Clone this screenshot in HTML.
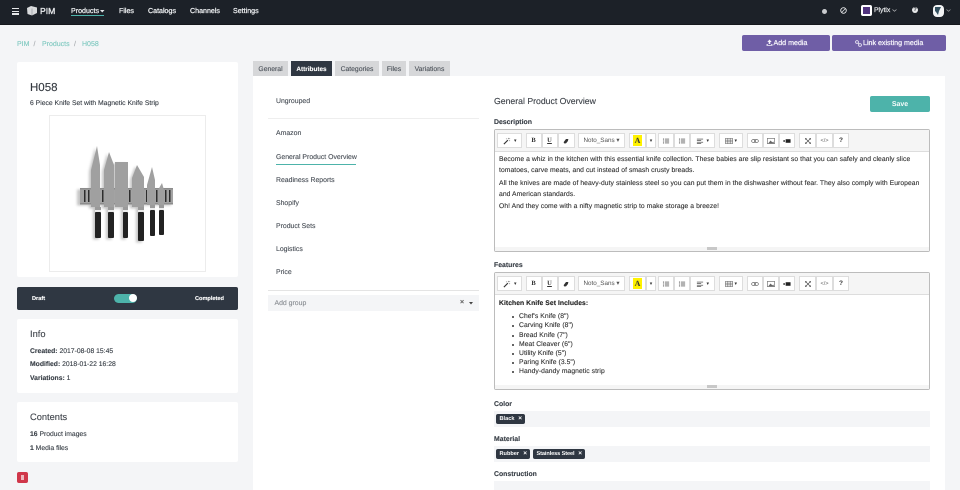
<!DOCTYPE html>
<html><head><meta charset="utf-8"><title>PIM</title>
<style>
html,body{margin:0;padding:0;width:960px;height:490px;overflow:hidden;background:#f4f5f7}
#w{position:absolute;left:0;top:0;width:960px;height:490px;overflow:hidden;filter:blur(.3px);font-family:"Liberation Sans",sans-serif;color:#3a4048;text-rendering:geometricPrecision}
.t{position:absolute;white-space:nowrap;line-height:0;font-size:6.8px;margin-top:1.3px;-webkit-text-stroke:.12px currentColor}
.b{position:absolute;box-sizing:border-box}
.card{position:absolute;background:#fff;left:17px;width:221px;border-radius:2px}
.n{color:#eef0f2;font-size:7.1px;top:9.500px;-webkit-text-stroke:.25px currentColor}
.g{font-size:6.900px;left:276px;color:#4a5058}
.l{font-size:6.900px;font-weight:bold;left:494px;color:#3a4048}
.t.p{font-size:6.750px;left:499px;color:#333;letter-spacing:.066px;margin-top:1.800px}
.ed{position:absolute;left:494px;width:436px;box-sizing:border-box;background:#fff;border:1px solid #bcbcbc;border-radius:2px}
.tb{position:absolute;left:0;top:0;right:0;height:21px;background:#f5f5f5;border-bottom:1px solid #ddd}
.h{position:absolute;height:15px;top:3px;box-sizing:border-box;background:#fff;border:1px solid #ddd;font-size:6.500px;color:#333;text-align:center;line-height:14px;white-space:nowrap}
.h svg{position:absolute;left:50%;top:50%;transform:translate(-50%,-50%)}
.st{position:absolute;left:0;right:0;bottom:0;height:4px;background:#f5f5f5}
.st i{position:absolute;left:212px;width:10px;top:0;height:3px;background:#c8c8c8}
.tag{position:absolute;height:10px;background:#2f3742;border-radius:2px;color:#fff;font-size:5.600px;font-weight:bold;line-height:10.500px;padding-left:3.500px;box-sizing:border-box;white-space:nowrap}
.tag span{position:absolute;right:3px;top:0;font-size:6.500px}
.f{position:absolute;left:494px;width:436px;background:#f4f5f7}
.tab{position:absolute;top:61px;height:15px;background:#d6d7d9;color:#4a5058;font-size:6.800px;text-align:center;line-height:17.500px;-webkit-text-stroke:.1px currentColor}
.btn{position:absolute;top:35px;height:16px;background:#6f5ea6;border-radius:2px;color:#f4f2fa;font-size:7.100px;line-height:17.500px;white-space:nowrap;-webkit-text-stroke:.25px currentColor}
</style></head><body><div id="w">

<svg width="0" height="0" style="position:absolute">
<symbol id="wand" viewBox="0 0 9 9"><path d="M1 8 5.500 3.500" stroke="#333" stroke-width="1.300"/><path d="M6.500 1v1.500M5.500 1.500 8 2M8 4.500 6.800 4M3.500 1.500 4 2.500" stroke="#777" stroke-width=".7"/></symbol>
<symbol id="eras" viewBox="0 0 9 9"><path d="M1.500 6 4.500 2h3L7 4.500 4.500 7.500H2z" fill="#333"/></symbol>
<symbol id="ul" viewBox="0 0 9 9"><path d="M3 2h5.500M3 4.500h5.500M3 7h5.500" stroke="#333" stroke-width=".9"/><path d="M.6 2h1.200M.6 4.500h1.200M.6 7h1.200" stroke="#333" stroke-width="1.100"/></symbol>
<symbol id="al" viewBox="0 0 9 9"><path d="M.5 2h8M.5 4h5.500M.5 6h8M.5 8h5.500" stroke="#333" stroke-width=".8"/></symbol>
<symbol id="tb" viewBox="0 0 9 9"><path d="M.5 1.500h8v6h-8zM.5 3.500h8M.5 5.500h8M3.200 1.500v6M5.800 1.500v6" fill="none" stroke="#555" stroke-width=".6"/></symbol>
<symbol id="lnk" viewBox="0 0 9 9"><ellipse cx="3" cy="4.500" rx="2.300" ry="1.700" fill="none" stroke="#666" stroke-width=".8"/><ellipse cx="6" cy="4.500" rx="2.300" ry="1.700" fill="none" stroke="#666" stroke-width=".8"/></symbol>
<symbol id="pic" viewBox="0 0 9 9"><path d="M.5 1.500h8v6h-8z" fill="none" stroke="#666" stroke-width=".7"/><path d="M1.500 7 4 4l2 2 1-1 1 2z" fill="#666"/></symbol>
<symbol id="vid" viewBox="0 0 9 9"><rect x="3" y="2.500" width="5.500" height="4" fill="#222"/><path d="M.5 3.500h1.500v2H.5z" fill="#222"/></symbol>
<symbol id="exp" viewBox="0 0 9 9"><path d="M1 1 8 8M8 1 1 8" stroke="#444" stroke-width=".8"/><path d="M1 1h2.200L1 3.200zM8 1H5.800L8 3.200zM1 8h2.200L1 5.800zM8 8H5.800L8 5.800z" fill="#444"/></symbol>
</svg>

<div class="b" style="left:0;top:0;width:960px;height:25px;background:#1c2128;border-bottom:1px solid #15181d"></div>
<div class="b" style="left:12px;top:8px;width:7px;height:1.400px;background:#e4e6e8"></div>
<div class="b" style="left:12px;top:10.600px;width:7px;height:1.400px;background:#e4e6e8"></div>
<div class="b" style="left:12px;top:13.200px;width:7px;height:1.400px;background:#e4e6e8"></div>
<svg class="b" style="left:26px;top:5px" width="12" height="11" viewBox="0 0 12 11"><path d="M1 3 5 1l6 1.500V8L6 10.500 1.500 9z" fill="#d8dadc"/><path d="M6 3.500V10.500" stroke="#8a8d92" stroke-width=".6"/></svg>
<div class="t" style="left:40px;top:9.500px;font-size:8.600px;color:#eceef0;-webkit-text-stroke:.3px currentColor">PIM</div>
<div class="t n" style="left:71px">Products</div>
<div class="b" style="left:71px;top:14.600px;width:33px;height:1px;background:#4db3aa"></div>
<svg class="b" style="left:99.500px;top:9.500px" width="5" height="3"><path d="M0 0h4.500L2.250 2.500z" fill="#e4e6e8"/></svg>
<div class="t n" style="left:119px">Files</div>
<div class="t n" style="left:148px">Catalogs</div>
<div class="t n" style="left:190px">Channels</div>
<div class="t n" style="left:233px">Settings</div>
<div class="b" style="left:821.500px;top:9px;width:5px;height:5px;border-radius:50%;background:#c9cbce"></div>
<svg class="b" style="left:839.500px;top:6.500px" width="7" height="7" viewBox="0 0 7 7"><circle cx="3.500" cy="3.500" r="2.800" fill="none" stroke="#e4e6e8" stroke-width=".9"/><path d="M1.500 5.500 5.500 1.500" stroke="#e4e6e8" stroke-width=".7" fill="none"/></svg>
<div class="b" style="left:861px;top:5px;width:11px;height:11px;background:#fff;border-radius:2px"></div>
<div class="b" style="left:863px;top:7px;width:7px;height:7px;background:#51347f"></div>
<div class="t" style="left:874px;top:9.500px;font-size:6.800px;color:#e4e6e8;-webkit-text-stroke:.2px currentColor">Plytix</div>
<svg class="b" style="left:892px;top:9px" width="5" height="3"><path d="M.5.500 2.500 2.300 4.500.500" stroke="#b5b7ba" stroke-width=".7" fill="none"/></svg>
<div class="b" style="left:912px;top:7px;width:6px;height:6px;border-radius:50%;background:#e8e9ea;color:#1c2128;font-size:5.500px;font-weight:bold;line-height:6.500px;text-align:center">?</div>
<div class="b" style="left:933px;top:5px;width:11px;height:12px;border-radius:4px;background:#f2f3f4"></div>
<svg class="b" style="left:934px;top:6px" width="8" height="10"><path d="M1 1h6L5 5 4 9 2 6 1 5z" fill="#33505f"/></svg>
<svg class="b" style="left:946px;top:9px" width="5" height="3"><path d="M.5.500 2.500 2.300 4.500.500" stroke="#9a9c9f" stroke-width=".7" fill="none"/></svg>

<div class="t" style="left:17px;top:44px;color:#7dc8bf;font-size:7px">PIM</div>
<div class="t" style="left:33.500px;top:44px;color:#a8acb0;font-size:7px">/</div>
<div class="t" style="left:42px;top:44px;color:#7dc8bf;font-size:7px">Products</div>
<div class="t" style="left:74px;top:44px;color:#a8acb0;font-size:7px">/</div>
<div class="t" style="left:82px;top:44px;color:#7dc8bf;font-size:7px">H058</div>

<div class="btn" style="left:742px;width:88px;padding-left:31.500px;box-sizing:border-box">Add media</div>
<svg class="b" style="left:765.500px;top:39px" width="7" height="7" viewBox="0 0 7 7"><path d="M3.500.500 1.300 3h1.400v2h1.600V3h1.400zM.5 5.200h1.500v.8h3v-.8h1.500V6.800H.5z" fill="#f4f2fa"/></svg>
<div class="btn" style="left:832px;width:113.500px;padding-left:31px;box-sizing:border-box">Link existing media</div>
<svg class="b" style="left:855px;top:39.500px" width="7" height="7" viewBox="0 0 7 7"><circle cx="2" cy="2" r="1.400" fill="none" stroke="#f4f2fa" stroke-width=".8"/><circle cx="5" cy="5" r="1.400" fill="none" stroke="#f4f2fa" stroke-width=".8"/><path d="M3 3 4 4" stroke="#f4f2fa" stroke-width=".8"/></svg>

<div class="card" style="top:62px;height:215px"></div>
<div class="t" style="left:30px;top:87px;font-size:11.500px;color:#33383f">H058</div>
<div class="t" style="left:30px;top:103px;font-size:6.800px">6 Piece Knife Set with Magnetic Knife Strip</div>
<div class="b" style="left:49px;top:115px;width:157px;height:157px;border:1px solid #ececec;background:#fff"></div>
<svg class="b" style="left:49px;top:115px" width="157" height="157" viewBox="49 115 157 157">
<defs><filter id="s" x="-30%" y="-30%" width="160%" height="160%"><feGaussianBlur stdDeviation="1.300"/></filter></defs>
<g transform="translate(-2 1.500)" fill="#666" opacity=".38" filter="url(#s)">
<path d="M97 146 100 165V207H91V170z"/><path d="M109 152 114 170V207H104V170z"/><rect x="115" y="162" width="13" height="45"/><path d="M137 165 144 176V207H132V178z"/><rect x="79" y="188" width="94" height="16"/>
<rect x="95" y="207" width="6" height="31"/><rect x="108" y="207" width="6" height="31"/><rect x="123" y="207" width="5" height="31"/><rect x="138" y="207" width="6" height="34"/>
</g>
<rect x="80" y="188" width="93" height="16.500" fill="#8c8c8c"/>
<rect x="80" y="189.500" width="93" height="13.500" fill="#cfcfcf" opacity=".35"/>
<g fill="#2d2d2d"><rect x="84" y="190" width="1.500" height="12"/><rect x="88" y="190" width="1.500" height="12"/><rect x="102" y="190" width="1.500" height="12"/><rect x="115" y="190" width="1.500" height="12"/><rect x="129" y="190" width="1.500" height="12"/><rect x="146" y="190" width="1.500" height="12"/><rect x="156" y="190" width="1.500" height="12"/><rect x="165" y="190" width="1.500" height="12"/><rect x="169" y="190" width="1.500" height="12"/></g>
<g fill="#a0a0a0"><path d="M97 146 100 165V207H91V170z"/><path d="M109 152 114 165V207H104V170z"/><rect x="115" y="162" width="13" height="45"/><path d="M137 165 144 177V207H132V178z"/><path d="M152 167 155 180V205H147V185z"/><path d="M162 183 164 190V205H158V190z"/></g>
<g fill="#9a9a9a"><rect x="95" y="207" width="6" height="3"/><rect x="108" y="207" width="6" height="3"/><rect x="123" y="207" width="5" height="3"/><rect x="138" y="207" width="6" height="3"/><rect x="150" y="205" width="5" height="3"/><rect x="159" y="205" width="5" height="3"/></g>
<g fill="#ececec"><rect x="95" y="210" width="6" height="2"/><rect x="108" y="210" width="6" height="2"/><rect x="123" y="210" width="5" height="2"/><rect x="138" y="210" width="6" height="2"/><rect x="150" y="208" width="5" height="2"/><rect x="159" y="208" width="5" height="2"/></g>
<g fill="#222"><rect x="95" y="212" width="6" height="26" rx="1"/><rect x="108" y="212" width="6" height="26" rx="1"/><rect x="123" y="212" width="5" height="26" rx="1"/><rect x="138" y="212" width="6" height="29" rx="1"/><rect x="150" y="210" width="5" height="26" rx="1"/><rect x="159" y="210" width="5" height="25" rx="1"/></g>
</svg>

<div class="b" style="left:17px;top:287px;width:221px;height:23px;background:#2f3742;border-radius:2px"></div>
<div class="t" style="left:32px;top:297.500px;color:#fff;font-size:5.600px;font-weight:bold">Draft</div>
<div class="b" style="left:114px;top:293.500px;width:23px;height:9px;border-radius:5px;background:#4db3aa"></div>
<div class="b" style="left:128.500px;top:294px;width:8px;height:8px;border-radius:50%;background:#fff"></div>
<div class="t" style="left:195px;top:297.500px;color:#fff;font-size:5.600px;font-weight:bold">Completed</div>

<div class="card" style="top:319px;height:74px"></div>
<div class="t" style="left:30px;top:333px;font-size:9.300px;color:#40454c">Info</div>
<div class="t" style="left:30px;top:350.500px"><b>Created:</b> 2017-08-08 15:45</div>
<div class="t" style="left:30px;top:364px"><b>Modified:</b> 2018-01-22 16:28</div>
<div class="t" style="left:30px;top:377.500px"><b>Variations:</b> 1</div>

<div class="card" style="top:402px;height:60px"></div>
<div class="t" style="left:30px;top:416px;font-size:9.300px;color:#40454c">Contents</div>
<div class="t" style="left:30px;top:434px"><b>16</b> Product images</div>
<div class="t" style="left:30px;top:447.500px"><b>1</b> Media files</div>
<div class="b" style="left:17px;top:472px;width:10.500px;height:11px;background:#d0374a;border-radius:2px"></div>
<div class="b" style="left:20.500px;top:475px;width:3.500px;height:5px;background:#eeb6bd"></div>

<div class="b" style="left:253px;top:76px;width:692px;height:414px;background:#fff"></div>
<div class="tab" style="left:253px;width:35px">General</div>
<div class="tab" style="left:291px;width:41px;background:#2f3742;color:#fff;font-weight:bold;font-size:6.400px">Attributes</div>
<div class="tab" style="left:335px;width:44px">Categories</div>
<div class="tab" style="left:382px;width:24px">Files</div>
<div class="tab" style="left:409px;width:41px">Variations</div>

<div class="t g" style="top:101px">Ungrouped</div>
<div class="b" style="left:268px;top:118px;width:211px;height:1px;background:#eee"></div>
<div class="t g" style="top:133px">Amazon</div>
<div class="t g" style="top:156.500px">General Product Overview</div>
<div class="b" style="left:276px;top:163.500px;width:80px;height:1px;background:#4db3aa"></div>
<div class="t g" style="top:179.500px">Readiness Reports</div>
<div class="t g" style="top:203px">Shopify</div>
<div class="t g" style="top:226px">Product Sets</div>
<div class="t g" style="top:249px">Logistics</div>
<div class="t g" style="top:272px">Price</div>
<div class="b" style="left:268px;top:290px;width:211px;height:1px;background:#e4e4e4"></div>
<div class="b" style="left:268px;top:295px;width:211px;height:16px;background:#f4f5f7"></div>
<div class="t g" style="left:274.500px;top:302.500px;color:#8b8f94">Add group</div>
<div class="t" style="left:460px;top:302px;font-size:7px;font-weight:bold;color:#666">&#215;</div>
<svg class="b" style="left:469px;top:301.500px" width="5" height="3"><path d="M0 0h4L2 2.500z" fill="#444"/></svg>

<div class="t" style="left:494px;top:100px;font-size:8.700px;color:#3d4249">General Product Overview</div>
<div class="b" style="left:870px;top:96px;width:60px;height:15.500px;background:#4db3aa;border-radius:2px;color:#f4fbfa;font-size:7px;font-weight:bold;text-align:center;line-height:17px">Save</div>

<div class="t l" style="top:122px">Description</div>
<div class="ed" style="top:129px;height:122.500px">
<div class="tb">
<div class="h" style="left:2px;width:25px;padding-left:8px;text-align:left;font-size:5px"><svg width="8" height="8" style="left:9px"><use href="#wand"/></svg><span style="margin-left:8px">&#9662;</span></div>
<div class="h" style="left:30.500px;width:16px;font-family:'Liberation Serif',serif;font-weight:bold">B</div>
<div class="h" style="left:46.500px;width:16px;font-family:'Liberation Serif',serif;font-weight:bold;text-decoration:underline">U</div>
<div class="h" style="left:62.500px;width:17px"><svg width="7" height="7"><use href="#eras"/></svg></div>
<div class="h" style="left:83px;width:47px;color:#555;font-size:6.300px">Noto_Sans &#9662;</div>
<div class="h" style="left:134px;width:17px;font-family:'Liberation Serif',serif;font-weight:bold;font-size:8px"><span style="background:#fff200;padding:1px 2px">A</span></div>
<div class="h" style="left:151px;width:10px;font-size:5px">&#9662;</div>
<div class="h" style="left:163px;width:16px"><svg width="7" height="7"><use href="#ul"/></svg></div>
<div class="h" style="left:179px;width:16px"><svg width="7" height="7"><use href="#ul"/></svg></div>
<div class="h" style="left:195px;width:25px;font-size:5px;text-align:right;padding-right:5px"><svg width="7" height="7" style="left:9px"><use href="#al"/></svg>&#9662;</div>
<div class="h" style="left:224px;width:24px;font-size:5px;text-align:right;padding-right:5px"><svg width="8" height="8" style="left:9px"><use href="#tb"/></svg>&#9662;</div>
<div class="h" style="left:252px;width:16px"><svg width="8" height="8"><use href="#lnk"/></svg></div>
<div class="h" style="left:268px;width:16px"><svg width="8" height="8"><use href="#pic"/></svg></div>
<div class="h" style="left:284px;width:16px"><svg width="8" height="8"><use href="#vid"/></svg></div>
<div class="h" style="left:304px;width:17px"><svg width="7" height="7"><use href="#exp"/></svg></div>
<div class="h" style="left:321px;width:17px;font-size:5.600px;color:#666">&lt;/&gt;</div>
<div class="h" style="left:338px;width:16px;font-weight:bold">?</div>
</div>
<div class="st"><i></i></div>
</div>
<div class="t p" style="top:158.500px">Become a whiz in the kitchen with this essential knife collection. These babies are slip resistant so that you can safely and cleanly slice</div>
<div class="t p" style="top:169.500px">tomatoes, carve meats, and cut instead of smash crusty breads.</div>
<div class="t p" style="top:182.500px">All the knives are made of heavy-duty stainless steel so you can put them in the dishwasher without fear. They also comply with European</div>
<div class="t p" style="top:193.500px">and American standards.</div>
<div class="t p" style="top:205px">Oh! And they come with a nifty magnetic strip to make storage a breeze!</div>

<div class="t l" style="top:265px">Features</div>
<div class="ed" style="top:272px;height:118px">
<div class="tb">
<div class="h" style="left:2px;width:25px;padding-left:8px;text-align:left;font-size:5px"><svg width="8" height="8" style="left:9px"><use href="#wand"/></svg><span style="margin-left:8px">&#9662;</span></div>
<div class="h" style="left:30.500px;width:16px;font-family:'Liberation Serif',serif;font-weight:bold">B</div>
<div class="h" style="left:46.500px;width:16px;font-family:'Liberation Serif',serif;font-weight:bold;text-decoration:underline">U</div>
<div class="h" style="left:62.500px;width:17px"><svg width="7" height="7"><use href="#eras"/></svg></div>
<div class="h" style="left:83px;width:47px;color:#555;font-size:6.300px">Noto_Sans &#9662;</div>
<div class="h" style="left:134px;width:17px;font-family:'Liberation Serif',serif;font-weight:bold;font-size:8px"><span style="background:#fff200;padding:1px 2px">A</span></div>
<div class="h" style="left:151px;width:10px;font-size:5px">&#9662;</div>
<div class="h" style="left:163px;width:16px"><svg width="7" height="7"><use href="#ul"/></svg></div>
<div class="h" style="left:179px;width:16px"><svg width="7" height="7"><use href="#ul"/></svg></div>
<div class="h" style="left:195px;width:25px;font-size:5px;text-align:right;padding-right:5px"><svg width="7" height="7" style="left:9px"><use href="#al"/></svg>&#9662;</div>
<div class="h" style="left:224px;width:24px;font-size:5px;text-align:right;padding-right:5px"><svg width="8" height="8" style="left:9px"><use href="#tb"/></svg>&#9662;</div>
<div class="h" style="left:252px;width:16px"><svg width="8" height="8"><use href="#lnk"/></svg></div>
<div class="h" style="left:268px;width:16px"><svg width="8" height="8"><use href="#pic"/></svg></div>
<div class="h" style="left:284px;width:16px"><svg width="8" height="8"><use href="#vid"/></svg></div>
<div class="h" style="left:304px;width:17px"><svg width="7" height="7"><use href="#exp"/></svg></div>
<div class="h" style="left:321px;width:17px;font-size:5.600px;color:#666">&lt;/&gt;</div>
<div class="h" style="left:338px;width:16px;font-weight:bold">?</div>
</div>
<div class="st"><i></i></div>
</div>
<div class="t p" style="top:302px;font-weight:bold;color:#222">Kitchen Knife Set Includes:</div>
<div class="t p" style="left:519px;top:315.500px">Chef's Knife (8")</div>
<div class="t p" style="left:519px;top:324.500px">Carving Knife (8")</div>
<div class="t p" style="left:519px;top:334px">Bread Knife (7")</div>
<div class="t p" style="left:519px;top:343px">Meat Cleaver (6")</div>
<div class="t p" style="left:519px;top:352px">Utility Knife (5")</div>
<div class="t p" style="left:519px;top:361px">Paring Knife (3.5")</div>
<div class="t p" style="left:519px;top:370.500px">Handy-dandy magnetic strip</div>
<div class="b" style="left:511.500px;top:316px;width:2px;height:2px;border-radius:50%;background:#333"></div>
<div class="b" style="left:511.500px;top:325px;width:2px;height:2px;border-radius:50%;background:#333"></div>
<div class="b" style="left:511.500px;top:334.500px;width:2px;height:2px;border-radius:50%;background:#333"></div>
<div class="b" style="left:511.500px;top:343.500px;width:2px;height:2px;border-radius:50%;background:#333"></div>
<div class="b" style="left:511.500px;top:352.500px;width:2px;height:2px;border-radius:50%;background:#333"></div>
<div class="b" style="left:511.500px;top:361.500px;width:2px;height:2px;border-radius:50%;background:#333"></div>
<div class="b" style="left:511.500px;top:371px;width:2px;height:2px;border-radius:50%;background:#333"></div>

<div class="t l" style="top:403.500px">Color</div>
<div class="f" style="top:411px;height:16px"></div>
<div class="tag" style="left:496px;top:414px;width:29px">Black <span>&#215;</span></div>
<div class="t l" style="top:438.500px">Material</div>
<div class="f" style="top:446px;height:16px"></div>
<div class="tag" style="left:496px;top:449px;width:34px">Rubber <span>&#215;</span></div>
<div class="tag" style="left:533px;top:449px;width:52px;letter-spacing:-.1px">Stainless Steel <span>&#215;</span></div>
<div class="t l" style="top:474px">Construction</div>
<div class="f" style="top:481px;height:9px"></div>
</div></body></html>
